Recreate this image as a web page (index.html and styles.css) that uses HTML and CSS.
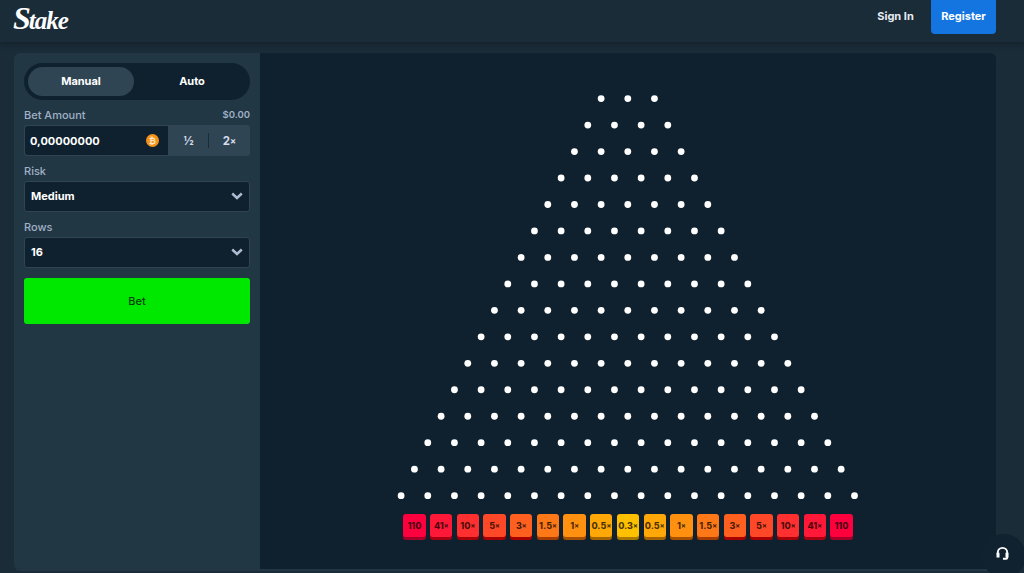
FILE: index.html
```html
<!DOCTYPE html>
<html lang="en">
<head>
    <meta charset="UTF-8">
    <meta name="viewport" content="width=device-width, initial-scale=1.0">
    <title>Plinko</title>
    <link rel="stylesheet" href="styles.css">
</head>
<body>
<header class="topbar">
    <a class="logo"><span class="logo-cap">S</span>take</a>
    <div class="auth">
        <button class="signin">Sign In</button>
        <button class="register">Register</button>
    </div>
</header>

<main class="game">
    <aside class="sidebar">
        <div class="tabs">
            <div class="tab active">Manual</div>
            <div class="tab">Auto</div>
        </div>

        <div class="label-row">
            <span>Bet Amount</span>
            <span class="usd">$0.00</span>
        </div>
        <div class="amount">
            <div class="amount-input">
                <span>0,00000000</span>
                <span class="btc">₿</span>
            </div>
            <div class="amount-btn half">½</div>
            <div class="amount-btn">2<small>×</small></div>
        </div>

        <div class="label-row">Risk</div>
        <div class="select">
            <span>Medium</span>
            <svg class="chevron" viewBox="0 0 12 8"><path d="M1.2 1.5 6 6l4.8-4.5"/></svg>
        </div>

        <div class="label-row">Rows</div>
        <div class="select">
            <span>16</span>
            <svg class="chevron" viewBox="0 0 12 8"><path d="M1.2 1.5 6 6l4.8-4.5"/></svg>
        </div>

        <button class="bet">Bet</button>
    </aside>

    <section class="board">
        <svg id="pegs" class="pegs" viewBox="0 0 736 405"></svg>
        <div class="buckets">
            <div class="bucket c0">110</div>
            <div class="bucket c1">41<small>×</small></div>
            <div class="bucket c2">10<small>×</small></div>
            <div class="bucket c3">5<small>×</small></div>
            <div class="bucket c4">3<small>×</small></div>
            <div class="bucket c5">1.5<small>×</small></div>
            <div class="bucket c6">1<small>×</small></div>
            <div class="bucket c7">0.5<small>×</small></div>
            <div class="bucket c8">0.3<small>×</small></div>
            <div class="bucket c7">0.5<small>×</small></div>
            <div class="bucket c6">1<small>×</small></div>
            <div class="bucket c5">1.5<small>×</small></div>
            <div class="bucket c4">3<small>×</small></div>
            <div class="bucket c3">5<small>×</small></div>
            <div class="bucket c2">10<small>×</small></div>
            <div class="bucket c1">41<small>×</small></div>
            <div class="bucket c0">110</div>
        </div>
    </section>
</main>

<div class="support">
    <svg viewBox="0 0 16 16"><path d="M3 10.5V8a5 5 0 0 1 10 0v2.5"/><path class="cup" d="M1.6 8.2h3.2v5H1.6zM11.2 8.2h3.2v5h-3.2z"/><path d="M13 12.5v1.2q0 1-1 1H8.5"/></svg>
</div>

<script src="script.js"></script>
</body>
</html>
```
FILE: styles.css
```css
* {
    box-sizing: border-box;
}

html, body {
    height: 100%;
}

body {
    margin: 0;
    overflow: hidden;
    background-color: #1a2c38;
    font-family: Inter, "Noto Sans", sans-serif;
    font-size: 11px;
    font-weight: 700;
    color: #fff;
}

.topbar {
    height: 42px;
    padding: 0 28px 0 13px;
    display: flex;
    align-items: flex-start;
    justify-content: space-between;
    background-color: #1a2c38;
    box-shadow: 0 2px 6px rgba(0, 0, 0, .25);
}

.logo {
    padding-top: 1px;
    font-family: "Liberation Serif", serif;
    font-style: italic;
    font-weight: 700;
    font-size: 25px;
    line-height: 34px;
    letter-spacing: -1px;
    color: #fff;
}

.logo-cap {
    font-size: 32px;
    letter-spacing: -2px;
}

.auth {
    display: flex;
    align-items: stretch;
    height: 34px;
}

.auth button {
    border: none;
    font: inherit;
    color: #fff;
    cursor: pointer;
    padding-bottom: 3px;
}

.signin {
    width: 65px;
    margin-right: 3px;
    background: none;
}

.auth .signin {
    color: #e6ebf2;
}

.register {
    width: 65px;
    background-color: #1475e1;
    border-radius: 0 0 4px 4px;
}

.game {
    height: 516px;
    margin: 11px 28px 0 14px;
    display: flex;
    border-radius: 6px;
    overflow: hidden;
    box-shadow: 0 2px 0 #213743;
}

.sidebar {
    width: 246px;
    padding: 10px 10px 0;
    background-color: #213743;
}

.tabs {
    height: 37px;
    padding: 4px;
    display: flex;
    background-color: #0f212e;
    border-radius: 19px;
}

.tab {
    flex: 1;
    padding-left: 4px;
    padding-bottom: 1px;
    display: flex;
    align-items: center;
    justify-content: center;
    border-radius: 15px;
}

.tab.active {
    background-color: #2f4553;
    flex: 0 0 106px;
    padding-left: 0;
}

.label-row {
    height: 15px;
    margin-top: 7px;
    margin-bottom: 3px;
    display: flex;
    justify-content: space-between;
    align-items: center;
    color: #a0b0c8;
    font-size: 11px;
    font-weight: 500;
}

.usd {
    font-size: 9.5px;
    font-weight: 600;
}

.amount {
    height: 31px;
    display: flex;
    background-color: #2f4553;
    border-radius: 3px;
    padding: 1px 0 1px 1px;
    margin-bottom: 7px;
}

.amount-input {
    width: 143px;
    padding: 0 9px 0 5px;
    display: flex;
    align-items: center;
    justify-content: space-between;
    background-color: #0f212e;
    border-radius: 3px 0 0 3px;
}

.btc {
    width: 13px;
    height: 13px;
    display: flex;
    align-items: center;
    justify-content: center;
    background-color: #f7931a;
    border-radius: 50%;
    font-family: "DejaVu Sans", sans-serif;
    font-size: 8.5px;
    color: #ffe9c9;
}

.amount-btn {
    flex: 1;
    display: flex;
    align-items: center;
    justify-content: center;
    color: #d5dceb;
    font-size: 11.5px;
}

.amount-btn small {
    font-size: 9px;
}

.amount-btn.half {
    position: relative;
}

.amount-btn.half::after {
    content: "";
    position: absolute;
    right: 0;
    top: 7px;
    bottom: 7px;
    width: 1px;
    background-color: #1a2c38;
}

.select {
    height: 31px;
    padding: 0 6px 1px;
    display: flex;
    align-items: center;
    justify-content: space-between;
    background-color: #0f212e;
    border: 1px solid #2f4553;
    border-radius: 3px;
    margin-bottom: 7px;
}

.chevron {
    width: 12px;
    height: 8px;
    fill: none;
    stroke: #b1bad3;
    stroke-width: 2.4;
}

.bet {
    display: block;
    width: 100%;
    height: 46px;
    margin-top: 10px;
    border: none;
    border-radius: 3px;
    background-color: #00e700;
    color: #04400a;
    font-family: inherit;
    font-size: 11px;
    font-weight: 500;
}

.board {
    flex: 1;
    padding-top: 43px;
    background-color: #0f212e;
    display: flex;
    flex-direction: column;
    align-items: center;
}

.pegs {
    display: block;
    width: 736px;
    height: 405px;
    fill: #fff;
    flex: none;
    overflow: visible;
}

.buckets {
    margin-top: 13px;
    display: flex;
    gap: 4.4px;
}

.bucket {
    width: 22.3px;
    height: 23px;
    display: flex;
    align-items: center;
    justify-content: center;
    border-radius: 3px;
    color: rgba(0, 0, 0, .72);
    font-size: 9px;
    font-weight: 800;
    white-space: nowrap;
}

.bucket small {
    font-size: 7px;
}

.c0 { background-color: #ff003f; box-shadow: 0 3px 0 #a6002a; }
.c1 { background-color: #ff1837; box-shadow: 0 3px 0 #a60012; }
.c2 { background-color: #ff302f; box-shadow: 0 3px 0 #a60008; }
.c3 { background-color: #ff4827; box-shadow: 0 3px 0 #a60004; }
.c4 { background-color: #ff6020; box-shadow: 0 3px 0 #a60000; }
.c5 { background-color: #ff7818; box-shadow: 0 3px 0 #a63c00; }
.c6 { background-color: #ff9010; box-shadow: 0 3px 0 #a65000; }
.c7 { background-color: #ffa808; box-shadow: 0 3px 0 #a66400; }
.c8 { background-color: #ffc000; box-shadow: 0 3px 0 #ab7900; }

.support {
    position: absolute;
    right: -2px;
    bottom: -5px;
    width: 44px;
    height: 44px;
    display: flex;
    justify-content: center;
    padding-top: 11px;
    padding-right: 4px;
    background-color: #10222f;
    border-radius: 50%;
}

.support svg {
    width: 15px;
    height: 15px;
    fill: none;
    stroke: #fff;
    stroke-width: 2;
}

.support .cup {
    fill: #fff;
    stroke: none;
}
```
FILE: script.js
```js
// 16 rows of pegs, first row has 3
let pegs = document.getElementById("pegs");
for (let i = 0; i < 16; i++) {
    for (let j = 0; j < i + 3; j++) {
        let peg = document.createElementNS("http://www.w3.org/2000/svg", "circle");
        peg.setAttribute("cx", 367.8 + (j - (i + 2) / 2) * 26.67);
        peg.setAttribute("cy", 2.6 + i * 26.47);
        peg.setAttribute("r", 3.4);
        pegs.appendChild(peg);
    }
}
```
